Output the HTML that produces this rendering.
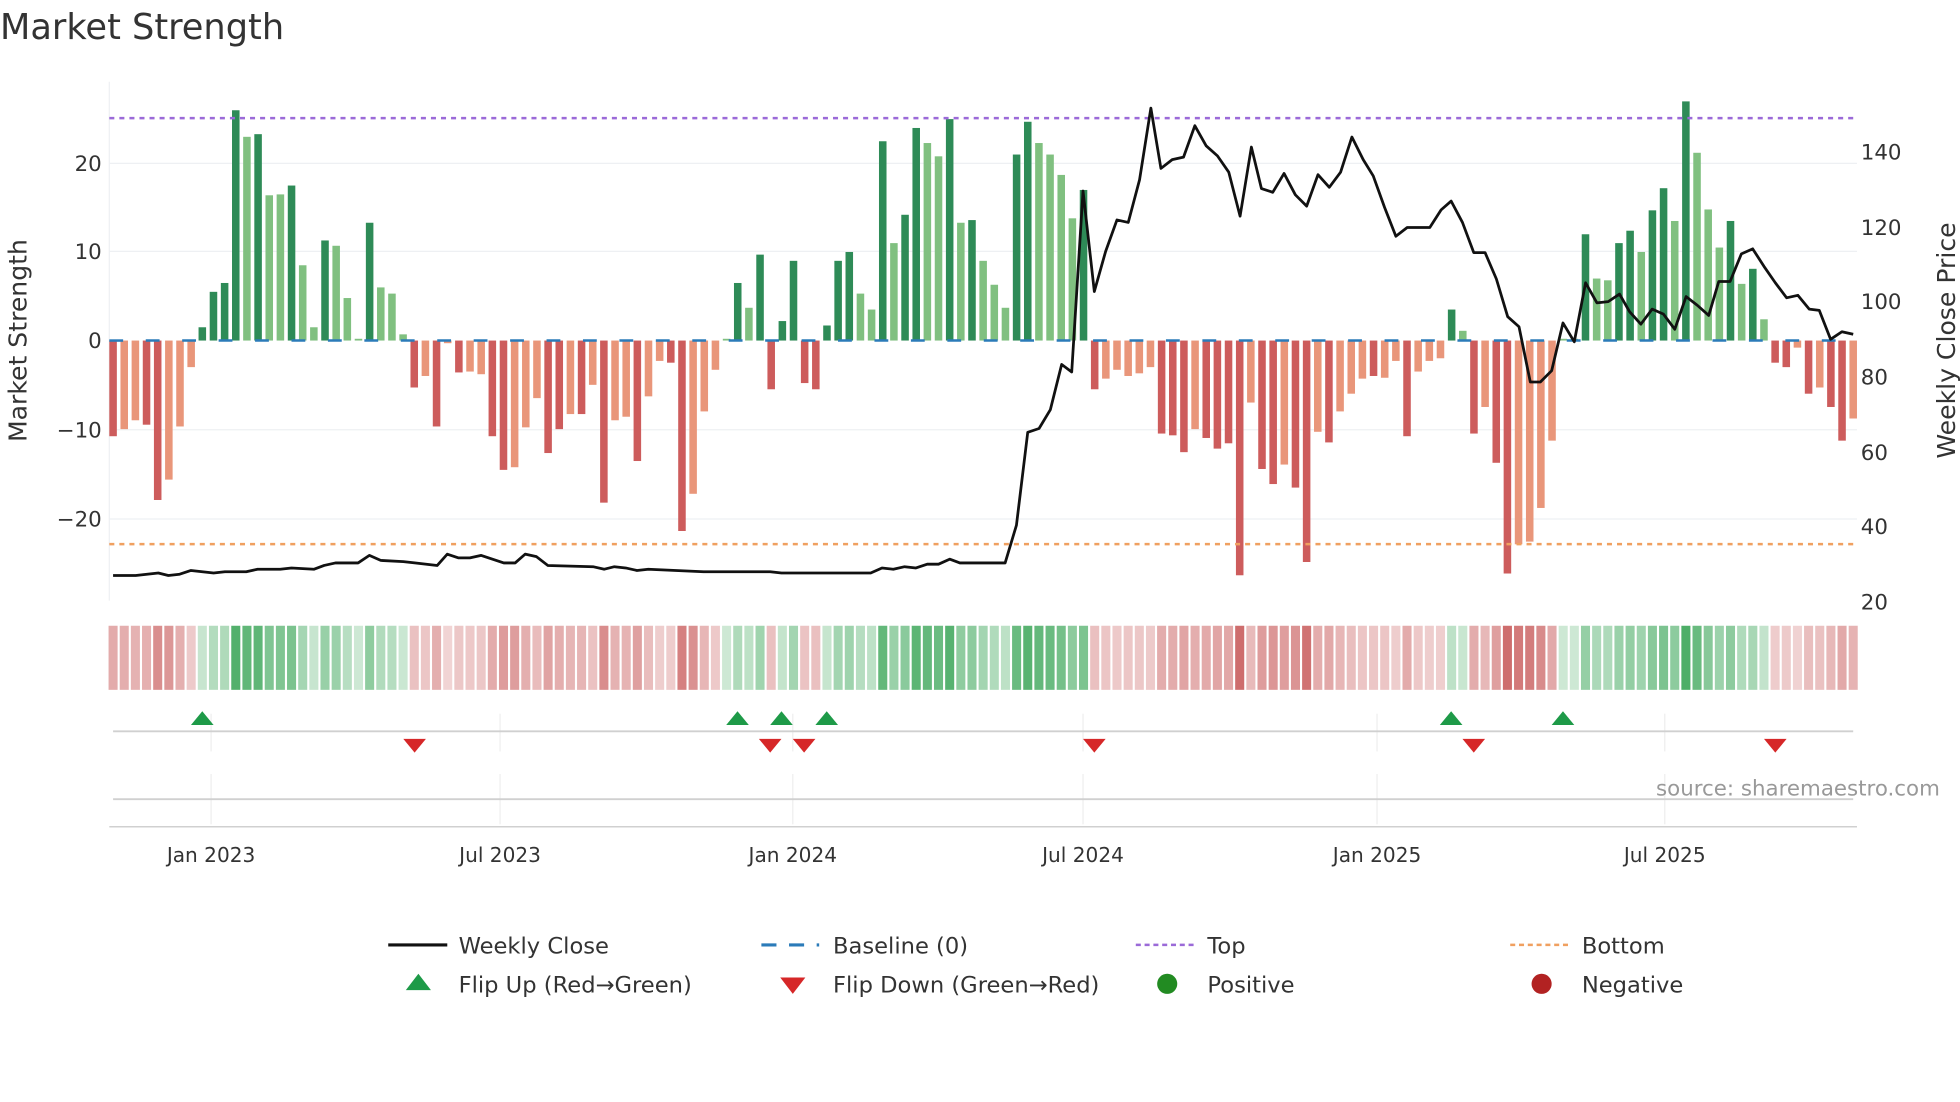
<!DOCTYPE html>
<html><head><meta charset="utf-8"><style>
html,body{margin:0;padding:0;background:#fff;}
svg{display:block;font-family:"DejaVu Sans","Liberation Sans",sans-serif;}
</style></head><body>
<svg id="s" width="1960" height="1102" viewBox="0 0 1560 877" xmlns="http://www.w3.org/2000/svg">
<rect width="1560" height="877" fill="#fff"/>
<text x="0" y="31" font-size="28" fill="#333">Market Strength</text>
<g stroke="#eef0f3" stroke-width="1">
<line x1="87" x2="1478" y1="130" y2="130"/><line x1="87" x2="1478" y1="200" y2="200"/><line x1="87" x2="1478" y1="342" y2="342"/><line x1="87" x2="1478" y1="413" y2="413"/>
<line x1="87" x2="87" y1="65" y2="478"/>
</g>
<g id="bars"></g>
<line x1="87" x2="1478" y1="271" y2="271" stroke="#2b7bb9" stroke-width="2" stroke-dasharray="11,18"/>
<line x1="87" x2="1478" y1="94" y2="94" stroke="#9b6ad8" stroke-width="2" stroke-dasharray="4,4"/>
<line x1="87" x2="1478" y1="433" y2="433" stroke="#f0a060" stroke-width="2" stroke-dasharray="4,4"/>
<polyline id="price" fill="none" stroke="#111" stroke-width="2.2" stroke-linejoin="round"/>
<g font-size="17" fill="#333" text-anchor="end">
<text x="81" y="136">20</text><text x="81" y="206">10</text><text x="81" y="277">0</text><text x="81" y="348">−10</text><text x="81" y="419">−20</text>
</g>
<g font-size="17" fill="#333">
<text x="1481" y="127">140</text><text x="1481" y="187">120</text><text x="1481" y="246">100</text><text x="1481" y="306">80</text><text x="1481" y="366">60</text><text x="1481" y="425">40</text><text x="1481" y="485">20</text>
</g>
<text transform="translate(21,271) rotate(-90)" text-anchor="middle" font-size="20" fill="#333">Market Strength</text>
<text transform="translate(1556,271) rotate(-90)" text-anchor="middle" font-size="20" fill="#333">Weekly Close Price</text>
<g id="heat"></g>
<g stroke="#eee" stroke-width="1">
<line x1="168" x2="168" y1="568" y2="598"/><line x1="398" x2="398" y1="568" y2="598"/><line x1="631" x2="631" y1="568" y2="598"/><line x1="862" x2="862" y1="568" y2="598"/><line x1="1096" x2="1096" y1="568" y2="598"/><line x1="1325" x2="1325" y1="568" y2="598"/>
<line x1="168" x2="168" y1="616" y2="656"/><line x1="398" x2="398" y1="616" y2="656"/><line x1="631" x2="631" y1="616" y2="656"/><line x1="862" x2="862" y1="616" y2="656"/><line x1="1096" x2="1096" y1="616" y2="656"/><line x1="1325" x2="1325" y1="616" y2="656"/>
</g>
<line x1="90" x2="1475" y1="582" y2="582" stroke="#d0d0d0" stroke-width="1.5"/>
<line x1="90" x2="1475" y1="636" y2="636" stroke="#d0d0d0" stroke-width="1.5"/>
<line x1="87" x2="1478" y1="658" y2="658" stroke="#d0d0d0" stroke-width="1.2"/>
<g id="marks"></g>
<text x="1544" y="633" text-anchor="end" font-size="17" fill="#999">source: sharemaestro.com</text>
<g font-size="16" fill="#333" text-anchor="middle">
<text x="168" y="686">Jan 2023</text><text x="398" y="686">Jul 2023</text><text x="631" y="686">Jan 2024</text><text x="862" y="686">Jul 2024</text><text x="1096" y="686">Jan 2025</text><text x="1325" y="686">Jul 2025</text>
</g>
<g font-size="18" fill="#333">
<line x1="309" x2="356" y1="752" y2="752" stroke="#111" stroke-width="2.5"/><text x="365" y="759">Weekly Close</text>
<line x1="606" x2="652" y1="752" y2="752" stroke="#2b7bb9" stroke-width="2.5" stroke-dasharray="12,10"/><text x="663" y="759">Baseline (0)</text>
<line x1="904" x2="950" y1="752" y2="752" stroke="#9b6ad8" stroke-width="2" stroke-dasharray="4,3"/><text x="961" y="759">Top</text>
<line x1="1202" x2="1248" y1="752" y2="752" stroke="#f0a060" stroke-width="2" stroke-dasharray="4,3"/><text x="1259" y="759">Bottom</text>
<polygon points="323,788 343,788 333,775" fill="#1e9a48"/><text x="365" y="790">Flip Up (Red→Green)</text>
<polygon points="621,778 641,778 631,791" fill="#d62728"/><text x="663" y="790">Flip Down (Green→Red)</text>
<circle cx="929" cy="783" r="8" fill="#228b22"/><text x="961" y="790">Positive</text>
<circle cx="1227" cy="783" r="8" fill="#b22222"/><text x="1259" y="790">Negative</text>
</g>
</svg>
<script>
var v=[-10.8,-10,-9,-9.5,-18,-15.7,-9.7,-3,1.5,5.5,6.5,26,23,23.3,16.4,16.5,17.5,8.5,1.5,11.3,10.7,4.8,0.2,13.3,6,5.3,0.7,-5.3,-4,-9.7,-0.3,-3.6,-3.5,-3.8,-10.8,-14.6,-14.3,-9.8,-6.5,-12.7,-10,-8.3,-8.3,-5,-18.3,-9,-8.6,-13.6,-6.3,-2.3,-2.5,-21.5,-17.3,-8,-3.3,0.2,6.5,3.7,9.7,-5.5,2.2,9,-4.8,-5.5,1.7,9,10,5.3,3.5,22.5,11,14.2,24,22.3,20.8,25,13.3,13.6,9,6.3,3.7,21,24.7,22.3,21,18.7,13.8,17,-5.5,-4.3,-3.3,-4,-3.7,-3,-10.5,-10.7,-12.6,-10,-11,-12.2,-11.6,-26.5,-7,-14.5,-16.2,-14,-16.6,-25,-10.3,-11.5,-8,-6,-4.3,-4,-4.2,-2.3,-10.8,-3.5,-2.3,-2,3.5,1.1,-10.5,-7.5,-13.8,-26.3,-23,-22.7,-18.9,-11.3,0.2,0.2,12,7,6.8,11,12.4,10,14.7,17.2,13.5,27,21.2,14.8,10.5,13.5,6.4,8.1,2.4,-2.5,-3,-0.8,-6,-5.3,-7.5,-11.3,-8.8];
var light=[0,1,1,0,0,1,1,1,0,0,0,0,1,0,1,1,0,1,1,0,1,1,1,0,1,1,1,0,1,0,1,0,1,1,0,0,1,1,1,0,0,1,0,1,0,1,1,0,1,1,0,0,1,1,1,1,0,1,0,0,0,0,0,0,0,0,0,1,1,0,1,0,0,1,1,0,1,0,1,1,1,0,0,1,1,1,1,0,0,1,1,1,1,1,0,0,0,1,0,0,0,0,1,0,0,1,0,0,1,0,1,1,1,0,1,1,0,1,1,1,0,1,0,1,0,0,1,1,1,1,1,1,0,1,1,0,0,1,0,0,1,0,1,1,1,0,1,0,1,0,0,1,0,1,0,0,1];
var NS="http://www.w3.org/2000/svg";
function el(t,a,p){var e=document.createElementNS(NS,t);for(var k in a)e.setAttribute(k,a[k]);document.getElementById(p).appendChild(e);return e;}
var x0=90,dx=(1475-90)/(v.length-1);
for(var i=0;i<v.length;i++){
 var x=x0+i*dx,val=v[i],h=Math.abs(val)*7.05,y=val>=0?271-h:271;
 var c=val>=0?(light[i]?"#80c080":"#2e8b57"):(light[i]?"#e9967a":"#cd5c5c");
 el("rect",{x:x-3,y:y,width:6,height:Math.max(h,0.5),fill:c},"bars");
 var a=0.25+0.65*Math.min(Math.abs(val),27)/27;
 el("rect",{x:x-3.6,y:498,width:7.2,height:51,fill:val>=0?"#3aa557":"#c85a5a","fill-opacity":a},"heat");
}
var pts=[[90,458],[108,458],[126,456],[134,458],[143,457],[152,454],[170,456],[179,455],[196,455],[205,453],[223,453],[232,452],[250,453],[258,450],[267,448],[285,448],[294,442],[303,446],[321,447],[330,448],[348,450],[356,441],[365,444],[374,444],[383,442],[401,448],[410,448],[418,441],[427,443],[436,450],[472,451],[481,453],[489,451],[498,452],[507,454],[516,453],[560,455],[613,455],[622,456],[658,456],[693,456],[702,452],[711,453],[720,451],[729,452],[738,449],[747,449],[756,445],[764,448],[800,448],[809,418],[818,344],[827,341],[836,326],[845,290],[853,296],[862,152],[871,232],[880,200],[889,175],[898,177],[907,143],[916,86],[924,134],[933,127],[942,125],[951,100],[960,116],[969,124],[978,137],[987,172],[996,117],[1004,150],[1013,153],[1022,138],[1031,155],[1040,164],[1049,139],[1058,149],[1067,137],[1076,109],[1085,127],[1093,140],[1102,165],[1111,188],[1120,181],[1138,181],[1147,167],[1155,160],[1164,177],[1173,201],[1182,201],[1191,222],[1200,252],[1209,260],[1218,304],[1226,304],[1235,295],[1244,257],[1253,272],[1262,225],[1271,241],[1280,240],[1289,234],[1297,248],[1306,258],[1315,246],[1324,250],[1333,262],[1342,236],[1351,243],[1360,251],[1368,224],[1377,224],[1386,202],[1395,198],[1404,212],[1413,225],[1422,237],[1431,235],[1440,246],[1448,247],[1457,270],[1466,264],[1475,266]];
document.getElementById("price").setAttribute("points",pts.map(function(p){return p.join(",")}).join(" "));
[161,587,622,658,1155,1244].forEach(function(x){el("polygon",{points:(x-9)+",577 "+(x+9)+",577 "+x+",566",fill:"#1e9a48"},"marks");});
[330,613,640,871,1173,1413].forEach(function(x){el("polygon",{points:(x-9)+",588 "+(x+9)+",588 "+x+",599",fill:"#d62728"},"marks");});
</script>
</body></html>
